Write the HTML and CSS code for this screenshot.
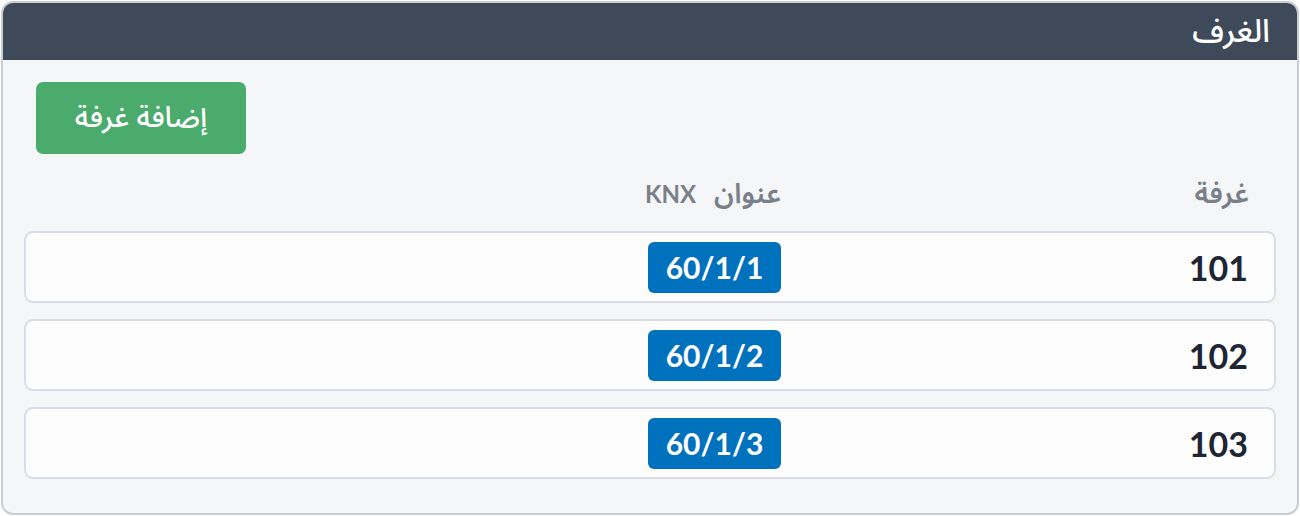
FILE: index.html
```html
<!DOCTYPE html>
<html lang="ar" dir="rtl">
<head>
<meta charset="utf-8">
<title>الغرف</title>
<link rel="stylesheet" href="styles.css">
</head>
<body>
<section class="card">
  <header class="card-header">
    <h1 class="card-title">الغرف</h1>
  </header>
  <div class="card-body">
    <div class="toolbar">
      <button class="btn-add" type="button">إضافة غرفة</button>
    </div>
    <div class="table-head">
      <div class="col-room"><span class="ar">غرفة</span></div>
      <div class="col-knx head-knx"><span class="ar ar-knx">عنوان</span><span class="knx">KNX</span></div>
    </div>
    <div class="rows">
      <div class="row">
        <div class="col-room room-num">101</div>
        <div class="col-knx"><span class="badge">60/1/1</span></div>
      </div>
      <div class="row">
        <div class="col-room room-num">102</div>
        <div class="col-knx"><span class="badge">60/1/2</span></div>
      </div>
      <div class="row">
        <div class="col-room room-num">103</div>
        <div class="col-knx"><span class="badge">60/1/3</span></div>
      </div>
    </div>
  </div>
</section>
</body>
</html>
```

FILE: styles.css
```css
* { box-sizing: border-box; }
html, body { margin: 0; padding: 0; background: #ffffff; }
body {
  font-family: "Lato", "Noto Sans", "Noto Sans Arabic", "DejaVu Sans", sans-serif;
  padding: 1px;
}
.card {
  width: 1298px;
  height: 514px;
  border: 2px solid #c9cdd6;
  border-radius: 12px;
  background: #f4f6f8;
  overflow: hidden;
  display: flex;
  flex-direction: column;
}
.card-header {
  height: 57px;
  background: #3e4a5a;
  display: flex;
  align-items: center;
  padding: 0 27px 4px;
}
.card-title {
  margin: 0;
  color: #ffffff;
  font-size: 32px;
  font-weight: 500;
  line-height: 1;
}
.card-body {
  padding: 22px 21px 0 21px;
}
.toolbar {
  display: flex;
  justify-content: flex-end;
  padding-left: 12px;
}
.btn-add {
  width: 210px;
  height: 72px;
  border: none;
  border-radius: 7px;
  background: #4aab6d;
  color: #ffffff;
  font-family: inherit;
  font-size: 29px;
  font-weight: 500;
  padding: 0 0 2px;
}
.table-head, .row {
  display: grid;
  grid-template-columns: 466px 1fr;
  align-items: center;
  padding: 0 27px 0 26px;
}
.row { padding-right: 26px; }
.table-head {
  height: 77px;
  color: #7a7f89;
  font-size: 24px;
  font-weight: 700;
  padding-top: 4px;
}
.table-head .ar {
  font-size: 28px;
  font-weight: 600;
}
.head-knx { padding-right: 2px; }
.ar-knx { margin-left: 18px; }
.rows {
  display: flex;
  flex-direction: column;
  gap: 16px;
}
.row {
  height: 72px;
  background: #fdfdfe;
  border: 2px solid #d9dee6;
  border-radius: 9px;
}
.room-num {
  font-size: 34px;
  font-weight: 700;
  color: #1e2533;
}
.col-knx { display: flex; justify-content: flex-start; align-items: baseline; }
.row .col-knx { padding-right: 1px; }
.badge {
  display: inline-flex;
  align-items: center;
  justify-content: center;
  width: 133px;
  height: 51px;
  border-radius: 6px;
  background: #0071bc;
  color: #ffffff;
  font-size: 30px;
  font-weight: 700;
}
```
